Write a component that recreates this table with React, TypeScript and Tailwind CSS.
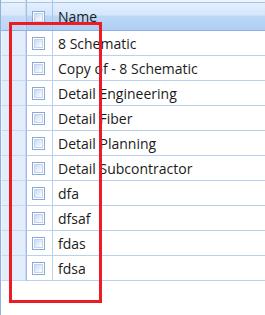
import React from 'react';

const rows = [
  '8 Schematic',
  'Copy of - 8 Schematic',
  'Detail Engineering',
  'Detail Fiber',
  'Detail Planning',
  'Detail Subcontractor',
  'dfa',
  'dfsaf',
  'fdas',
  'fdsa',
];

function Check() {
  return (
    <div className="w-[13px] h-[13px] border border-[#8aa9d8] bg-white p-px">
      <div className="w-full h-full border border-[#c3d4ec] bg-[linear-gradient(135deg,#c9daf1_0%,#e6eefa_55%,#ffffff_100%)]" />
    </div>
  );
}

export default function App() {
  return (
    <div
      className="relative w-[265px] h-[315px] overflow-hidden bg-white border-l border-[#8fb1dc] text-[14px] text-[#1b1b1b]"
      style={{ fontFamily: '"Open Sans", "Noto Sans", sans-serif' }}
    >
      {/* header */}
      <div className="flex h-[31px] border-b border-[#8db2e3] bg-[linear-gradient(to_bottom,#eef4fc_0px,#eef4fc_2px,#a8c6ec_2px,#a8c6ec_3px,#e3effd_3px,#d4e6fc_15px,#bcd8f7_16px,#b0cef3_30px)]">
        <div className="w-[25px] shrink-0 border-r border-[#c8dbf2] bg-[linear-gradient(to_bottom,#eef4fc_0px,#eef4fc_2px,#a8c6ec_2px,#a8c6ec_3px,#e6f0fc_3px,#d9e8fb_15px,#c6ddf7_16px,#bdd6f4_30px)]" />
        <div className="w-px shrink-0 bg-[#a4bddf]" />
        <div className="w-[26px] shrink-0 border-r border-[#a9c6ea] pl-[5px] pt-[11px]">
          <Check />
        </div>
        <div className="flex-1 pl-[5px] pt-[8px] leading-[18px]">Name</div>
      </div>

      {rows.map((name) => (
        <div key={name} className="flex h-[25px]">
          <div className="w-[25px] shrink-0 border-r border-b border-[#c6d9f1] bg-[#e3edfb] border-l border-l-[#f3f7fd]" />
          <div className="w-px shrink-0 bg-[#a4bddf]" />
          <div className="w-[26px] shrink-0 border-r border-b border-[#b9d1ee] flex items-center pl-[5px]">
            <Check />
          </div>
          <div className="flex-1 border-b border-[#b9d1ee] flex items-center pl-[5px] whitespace-nowrap">
            {name}
          </div>
        </div>
      ))}

      {/* annotation frame */}
      <div className="absolute left-[8px] top-[22px] w-[93px] h-[281px] border-[3px] border-[#ec1c24]" />
    </div>
  );
}
